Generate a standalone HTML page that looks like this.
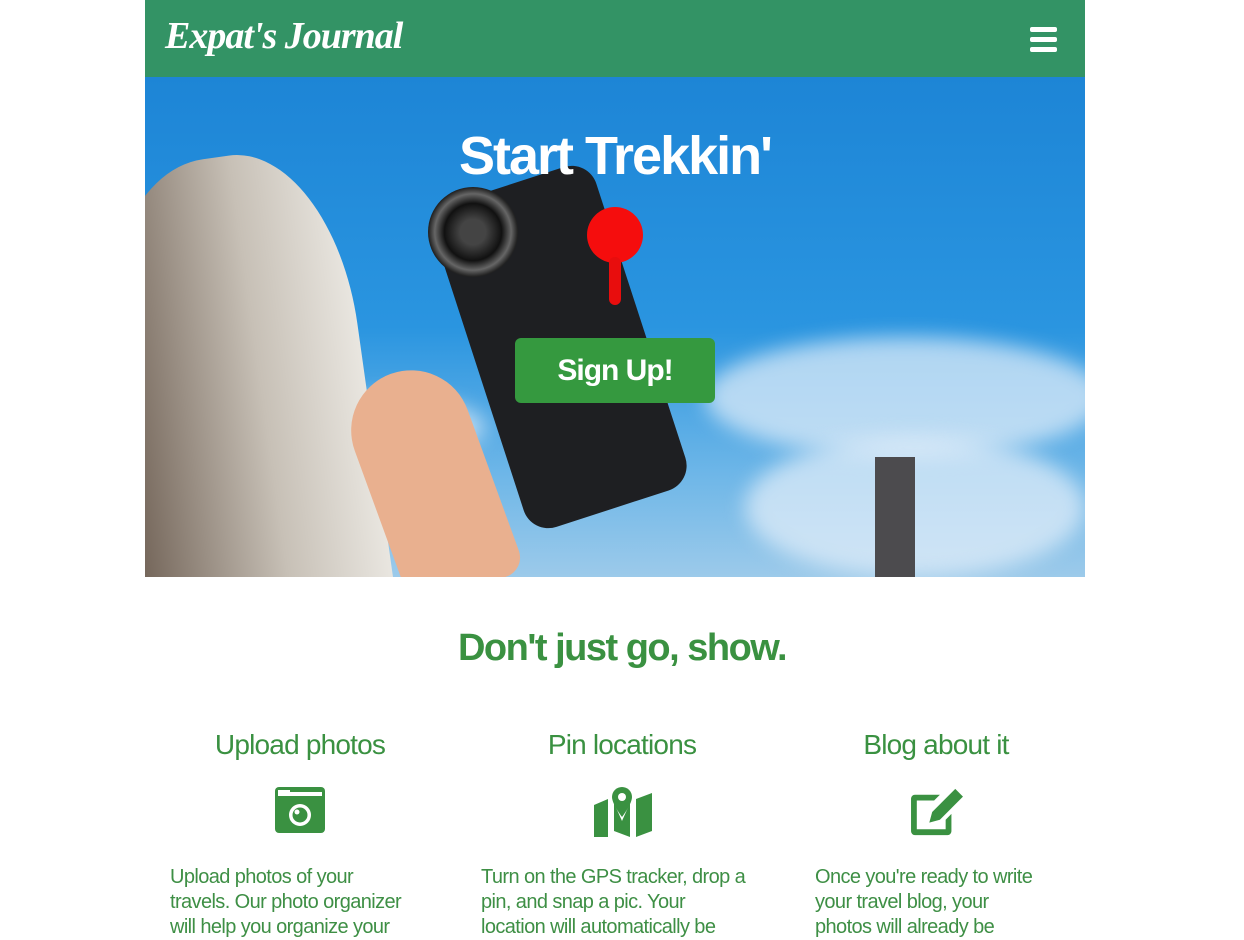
<!DOCTYPE html>
<html><head><meta charset="utf-8"><style>
html,body{margin:0;background:#fff;font-family:"Liberation Sans",sans-serif;overflow:hidden;height:931px}
.wrap{position:absolute;left:145px;width:940px;top:0}
.nav{height:77px;background:#339365;position:relative}
.logo{position:absolute;left:20px;top:14px;color:#fff;font:italic bold 38px "Liberation Serif",serif;letter-spacing:-1px}
.burger{position:absolute;right:28px;top:27px;width:27px}
.burger div{height:5px;background:#fff;border-radius:2px;margin-bottom:5px}
.hero{position:relative;height:500px;overflow:hidden;background:linear-gradient(180deg,#1d85d6 0%,#2a95e0 50%,#6fb7e8 80%,#9ccaea 100%)}
.cloud{position:absolute;border-radius:50%;background:rgba(230,240,250,.7);filter:blur(10px)}
h1{position:absolute;left:0;right:0;top:48px;margin:0;text-align:center;color:#fff;font:bold 54px "Liberation Sans",sans-serif;letter-spacing:-2px}
.btn{position:absolute;left:370px;top:261px;width:200px;height:65px;background:#35993f;border-radius:6px;color:#fff;font:bold 30px "Liberation Sans",sans-serif;letter-spacing:-1px;text-align:center;line-height:65px}
h2{position:absolute;top:627px;left:0;right:0;text-align:center;margin:0;color:#3a9141;font:bold 38px "Liberation Sans",sans-serif;letter-spacing:-1.5px}
.h3{position:absolute;top:729px;text-align:center;color:#3a9141;font-size:28px;letter-spacing:-0.8px;width:300px}
.ic{position:absolute;top:787px}
.p{position:absolute;top:865px;font-size:20px;line-height:25px;color:#3e8f45;letter-spacing:-0.6px;white-space:nowrap}
</style></head><body>
<div class="wrap">
<div class="nav"><div class="logo">Expat's Journal</div><div class="burger"><div></div><div></div><div></div></div></div>
<div class="hero">
<div class="cloud" style="left:560px;top:260px;width:400px;height:120px"></div>
<div class="cloud" style="left:600px;top:360px;width:340px;height:140px"></div>
<div class="cloud" style="left:140px;top:320px;width:200px;height:60px"></div>
<div style="position:absolute;left:-40px;top:80px;width:260px;height:460px;border-radius:50% 40% 0 0;background:linear-gradient(90deg,#6d5e52,#c7c0b6 60%,#e9e6e0);transform:rotate(-8deg)"></div>
<div style="position:absolute;left:330px;top:100px;width:170px;height:340px;background:#1e1f22;border-radius:26px;transform:rotate(-18deg)"></div>
<div style="position:absolute;left:283px;top:110px;width:90px;height:90px;border-radius:50%;background:radial-gradient(#444 20%,#111 45%,#666 60%,#222 70%)"></div>
<div style="position:absolute;left:225px;top:290px;width:120px;height:230px;background:#e9b08f;border-radius:60px 60px 20px 20px;transform:rotate(-20deg)"></div>
<div style="position:absolute;left:442px;top:130px;width:56px;height:56px;border-radius:50%;background:#f50d0d"></div>
<div style="position:absolute;left:464px;top:180px;width:12px;height:48px;border-radius:6px;background:#e80d0d"></div>
<div style="position:absolute;left:730px;top:380px;width:40px;height:120px;background:#4c4b4e"></div>
<h1>Start Trekkin'</h1>
<div class="btn">Sign Up!</div>
</div>
</div>
<h2>Don't just go, show.</h2>
<div class="h3" style="left:150px">Upload photos</div>
<div class="h3" style="left:472px">Pin locations</div>
<div class="h3" style="left:786px">Blog about it</div>
<svg class="ic" style="left:275px" width="50" height="46" viewBox="0 0 50 46"><rect x="0" y="0" width="50" height="46" rx="4" fill="#3a9141"/><rect x="3" y="5" width="44" height="4" fill="#fff"/><rect x="3" y="3" width="12" height="3" fill="#fff"/><circle cx="25" cy="28" r="11" fill="#fff"/><circle cx="25" cy="28" r="7.5" fill="#3a9141"/><circle cx="22" cy="25" r="2.5" fill="#fff"/></svg>
<svg class="ic" style="left:594px" width="58" height="50" viewBox="0 0 58 50"><path d="M0 18l14-6v38L0 50z M20 16l8 18 8-18v34l-16-6z M42 12l16-6v38l-16 6z" fill="#3a9141"/><path d="M28 0a10 10 0 0 1 10 10c0 7-10 20-10 20S18 17 18 10A10 10 0 0 1 28 0z" fill="#3a9141"/><circle cx="28" cy="10" r="4" fill="#fff"/></svg>
<svg class="ic" style="left:908px" width="58" height="50" viewBox="0 0 58 52"><path d="M32 8H6a4 4 0 0 0-4 4v34a4 4 0 0 0 4 4h34a4 4 0 0 0 4-4V28l-6 6v10H8V14h18z" fill="#3a9141"/><path d="M48 2l8 8-24 24-11 3 3-11z" fill="#3a9141"/></svg>
<div class="p" style="left:170px">Upload photos of your<br>travels. Our photo organizer<br>will help you organize your</div>
<div class="p" style="left:481px">Turn on the GPS tracker, drop a<br>pin, and snap a pic. Your<br>location will automatically be</div>
<div class="p" style="left:815px">Once you're ready to write<br>your travel blog, your<br>photos will already be</div>
</body></html>
